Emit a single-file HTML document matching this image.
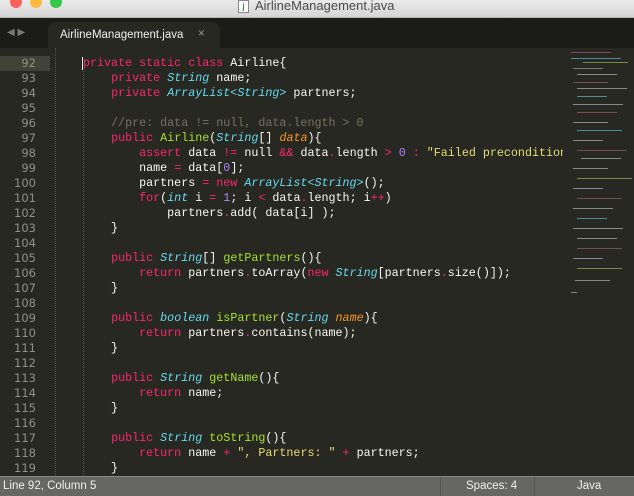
<!DOCTYPE html>
<html><head><style>
body{margin:0;width:634px;height:495px;overflow:hidden;background:#272822;position:relative;font-family:"Liberation Sans",sans-serif}
#title{position:absolute;left:0;top:0;width:634px;height:17px;background:linear-gradient(#ebebeb,#d5d5d5);border-bottom:1px solid #b5b5b5}
.dot{position:absolute;top:-4px;width:12px;height:12px;border-radius:50%}
#title .tt{position:absolute;left:255px;top:-2px;font-size:13px;color:#4a4a4a}
#tabs{position:absolute;left:0;top:18px;width:634px;height:30px;background:#1b1b18}
#tab{position:absolute;left:48px;top:4px;width:172px;height:26px;background:#272822;border-radius:8px 8px 0 0;color:#eee;font-size:11.5px}
.code{position:absolute;left:0;top:56px;font-family:"Liberation Mono",monospace;font-size:11.7px;line-height:15px;color:#f8f8f2;white-space:pre}
.ln{position:absolute;left:0;width:36px;text-align:right;color:#8f908a;font-family:"DejaVu Sans",sans-serif;font-size:11.5px}
.k{color:#f92672}.t{color:#66d9ef;font-style:italic}.f{color:#a6e22e}.p{color:#fd971f;font-style:italic}.n{color:#ae81ff}.s{color:#e6db74}.c{color:#75715e}
#status{position:absolute;left:0;top:476px;width:634px;height:19px;background:#666664;border-top:1px solid #8a8a88;color:#f0f0f0;font-size:11.5px}
.m{position:absolute;height:1px}
</style></head><body>
<div id="title">
<div class="dot" style="left:10px;background:#fc605b"></div>
<div class="dot" style="left:30px;background:#fdbc40"></div>
<div class="dot" style="left:50px;background:#34c84a"></div>
<div style="position:absolute;left:238px;top:0;width:9px;height:11px;background:#fff;border:1px solid #888;font-size:9px;line-height:11px;text-align:center;color:#060">j</div>
<div class="tt">AirlineManagement.java</div>
</div>
<div id="tabs">
<div style="position:absolute;left:7px;top:9px;color:#777;font-size:10px">◀ ▶</div>
<div id="tab"><span style="position:absolute;left:12px;top:7px">AirlineManagement.java</span><span style="position:absolute;left:150px;top:6px;color:#999">×</span></div>
</div>
<div style="position:absolute;left:0;top:56px;width:50px;height:15px;background:#414339"></div>
<div style="position:absolute;left:55px;top:48px;height:428px;border-left:1px dotted #555"></div>
<div style="position:absolute;left:82px;top:57px;width:1px;height:13px;background:#f8f8f2"></div>
<div style="position:absolute;left:83px;top:71px;height:405px;border-left:1px dotted #555"></div>
<div class="code" style="left:0">
<div class="ln" style="top:0">92</div><div class="ln" style="top:15px">93</div><div class="ln" style="top:30px">94</div><div class="ln" style="top:45px">95</div><div class="ln" style="top:60px">96</div><div class="ln" style="top:75px">97</div><div class="ln" style="top:90px">98</div><div class="ln" style="top:105px">99</div><div class="ln" style="top:120px">100</div><div class="ln" style="top:135px">101</div><div class="ln" style="top:150px">102</div><div class="ln" style="top:165px">103</div><div class="ln" style="top:180px">104</div><div class="ln" style="top:195px">105</div><div class="ln" style="top:210px">106</div><div class="ln" style="top:225px">107</div><div class="ln" style="top:240px">108</div><div class="ln" style="top:255px">109</div><div class="ln" style="top:270px">110</div><div class="ln" style="top:285px">111</div><div class="ln" style="top:300px">112</div><div class="ln" style="top:315px">113</div><div class="ln" style="top:330px">114</div><div class="ln" style="top:345px">115</div><div class="ln" style="top:360px">116</div><div class="ln" style="top:375px">117</div><div class="ln" style="top:390px">118</div><div class="ln" style="top:405px">119</div>
</div>
<div class="code" style="left:83px"><span class="k">private static class</span> Airline{
    <span class="k">private</span> <span class="t">String</span> name;
    <span class="k">private</span> <span class="t">ArrayList&lt;String&gt;</span> partners;

    <span class="c">//pre: data != null, data.length &gt; 0</span>
    <span class="k">public</span> <span class="f">Airline</span>(<span class="t">String</span>[] <span class="p">data</span>){
        <span class="k">assert</span> data <span class="k">!=</span> null <span class="k">&amp;&amp;</span> data<span class="k">.</span>length <span class="k">&gt;</span> <span class="n">0</span> <span class="k">:</span> <span class="s">"Failed precondition"</span>
        name <span class="k">=</span> data[<span class="n">0</span>];
        partners <span class="k">=</span> <span class="k">new</span> <span class="t">ArrayList&lt;String&gt;</span>();
        <span class="k">for</span>(<span class="t">int</span> i <span class="k">=</span> <span class="n">1</span>; i <span class="k">&lt;</span> data<span class="k">.</span>length; i<span class="k">++</span>)
            partners<span class="k">.</span>add( data[i] );
    }

    <span class="k">public</span> <span class="t">String</span>[] <span class="f">getPartners</span>(){
        <span class="k">return</span> partners<span class="k">.</span>toArray(<span class="k">new</span> <span class="t">String</span>[partners<span class="k">.</span>size()]);
    }

    <span class="k">public</span> <span class="t">boolean</span> <span class="f">isPartner</span>(<span class="t">String</span> <span class="p">name</span>){
        <span class="k">return</span> partners<span class="k">.</span>contains(name);
    }

    <span class="k">public</span> <span class="t">String</span> <span class="f">getName</span>(){
        <span class="k">return</span> name;
    }

    <span class="k">public</span> <span class="t">String</span> <span class="f">toString</span>(){
        <span class="k">return</span> name <span class="k">+</span> <span class="s">", Partners: "</span> <span class="k">+</span> partners;
    }</div>
<div style="position:absolute;left:563px;top:48px;width:71px;height:428px;background:#272822">
<div class="m" style="left:8px;top:4px;width:40px;background:#7a4a5a"></div>
<div class="m" style="left:8px;top:10px;width:50px;background:#4a8a9a"></div>
<div class="m" style="left:20px;top:14px;width:45px;background:#7a8a4a"></div>
<div class="m" style="left:10px;top:20px;width:30px;background:#777"></div>
<div class="m" style="left:14px;top:26px;width:40px;background:#888"></div>
<div class="m" style="left:10px;top:34px;width:35px;background:#7a4a5a"></div>
<div class="m" style="left:14px;top:40px;width:50px;background:#888"></div>
<div class="m" style="left:14px;top:48px;width:30px;background:#4a8a9a"></div>
<div class="m" style="left:10px;top:56px;width:50px;background:#888"></div>
<div class="m" style="left:14px;top:64px;width:40px;background:#7a4a5a"></div>
<div class="m" style="left:10px;top:74px;width:35px;background:#888"></div>
<div class="m" style="left:14px;top:82px;width:45px;background:#4a8a9a"></div>
<div class="m" style="left:10px;top:92px;width:30px;background:#888"></div>
<div class="m" style="left:14px;top:102px;width:50px;background:#7a4a5a"></div>
<div class="m" style="left:18px;top:110px;width:40px;background:#888"></div>
<div class="m" style="left:10px;top:120px;width:35px;background:#888"></div>
<div class="m" style="left:14px;top:130px;width:55px;background:#7a8a4a"></div>
<div class="m" style="left:10px;top:140px;width:30px;background:#888"></div>
<div class="m" style="left:14px;top:150px;width:45px;background:#7a4a5a"></div>
<div class="m" style="left:10px;top:160px;width:40px;background:#888"></div>
<div class="m" style="left:14px;top:170px;width:30px;background:#4a8a9a"></div>
<div class="m" style="left:10px;top:180px;width:50px;background:#888"></div>
<div class="m" style="left:14px;top:190px;width:40px;background:#888"></div>
<div class="m" style="left:14px;top:200px;width:45px;background:#7a4a5a"></div>
<div class="m" style="left:10px;top:210px;width:30px;background:#888"></div>
<div class="m" style="left:14px;top:220px;width:45px;background:#7a8a4a"></div>
<div class="m" style="left:12px;top:232px;width:35px;background:#888"></div>
<div class="m" style="left:8px;top:244px;width:6px;background:#888"></div>
</div>
<div id="status">
<span style="position:absolute;left:3px;top:3px">Line 92, Column 5</span>
<div style="position:absolute;left:440px;top:0;height:19px;border-left:1px solid #555"></div>
<span style="position:absolute;left:466px;top:3px">Spaces: 4</span>
<div style="position:absolute;left:534px;top:0;height:19px;border-left:1px solid #555"></div>
<span style="position:absolute;left:577px;top:3px">Java</span>
</div>
</body></html>
